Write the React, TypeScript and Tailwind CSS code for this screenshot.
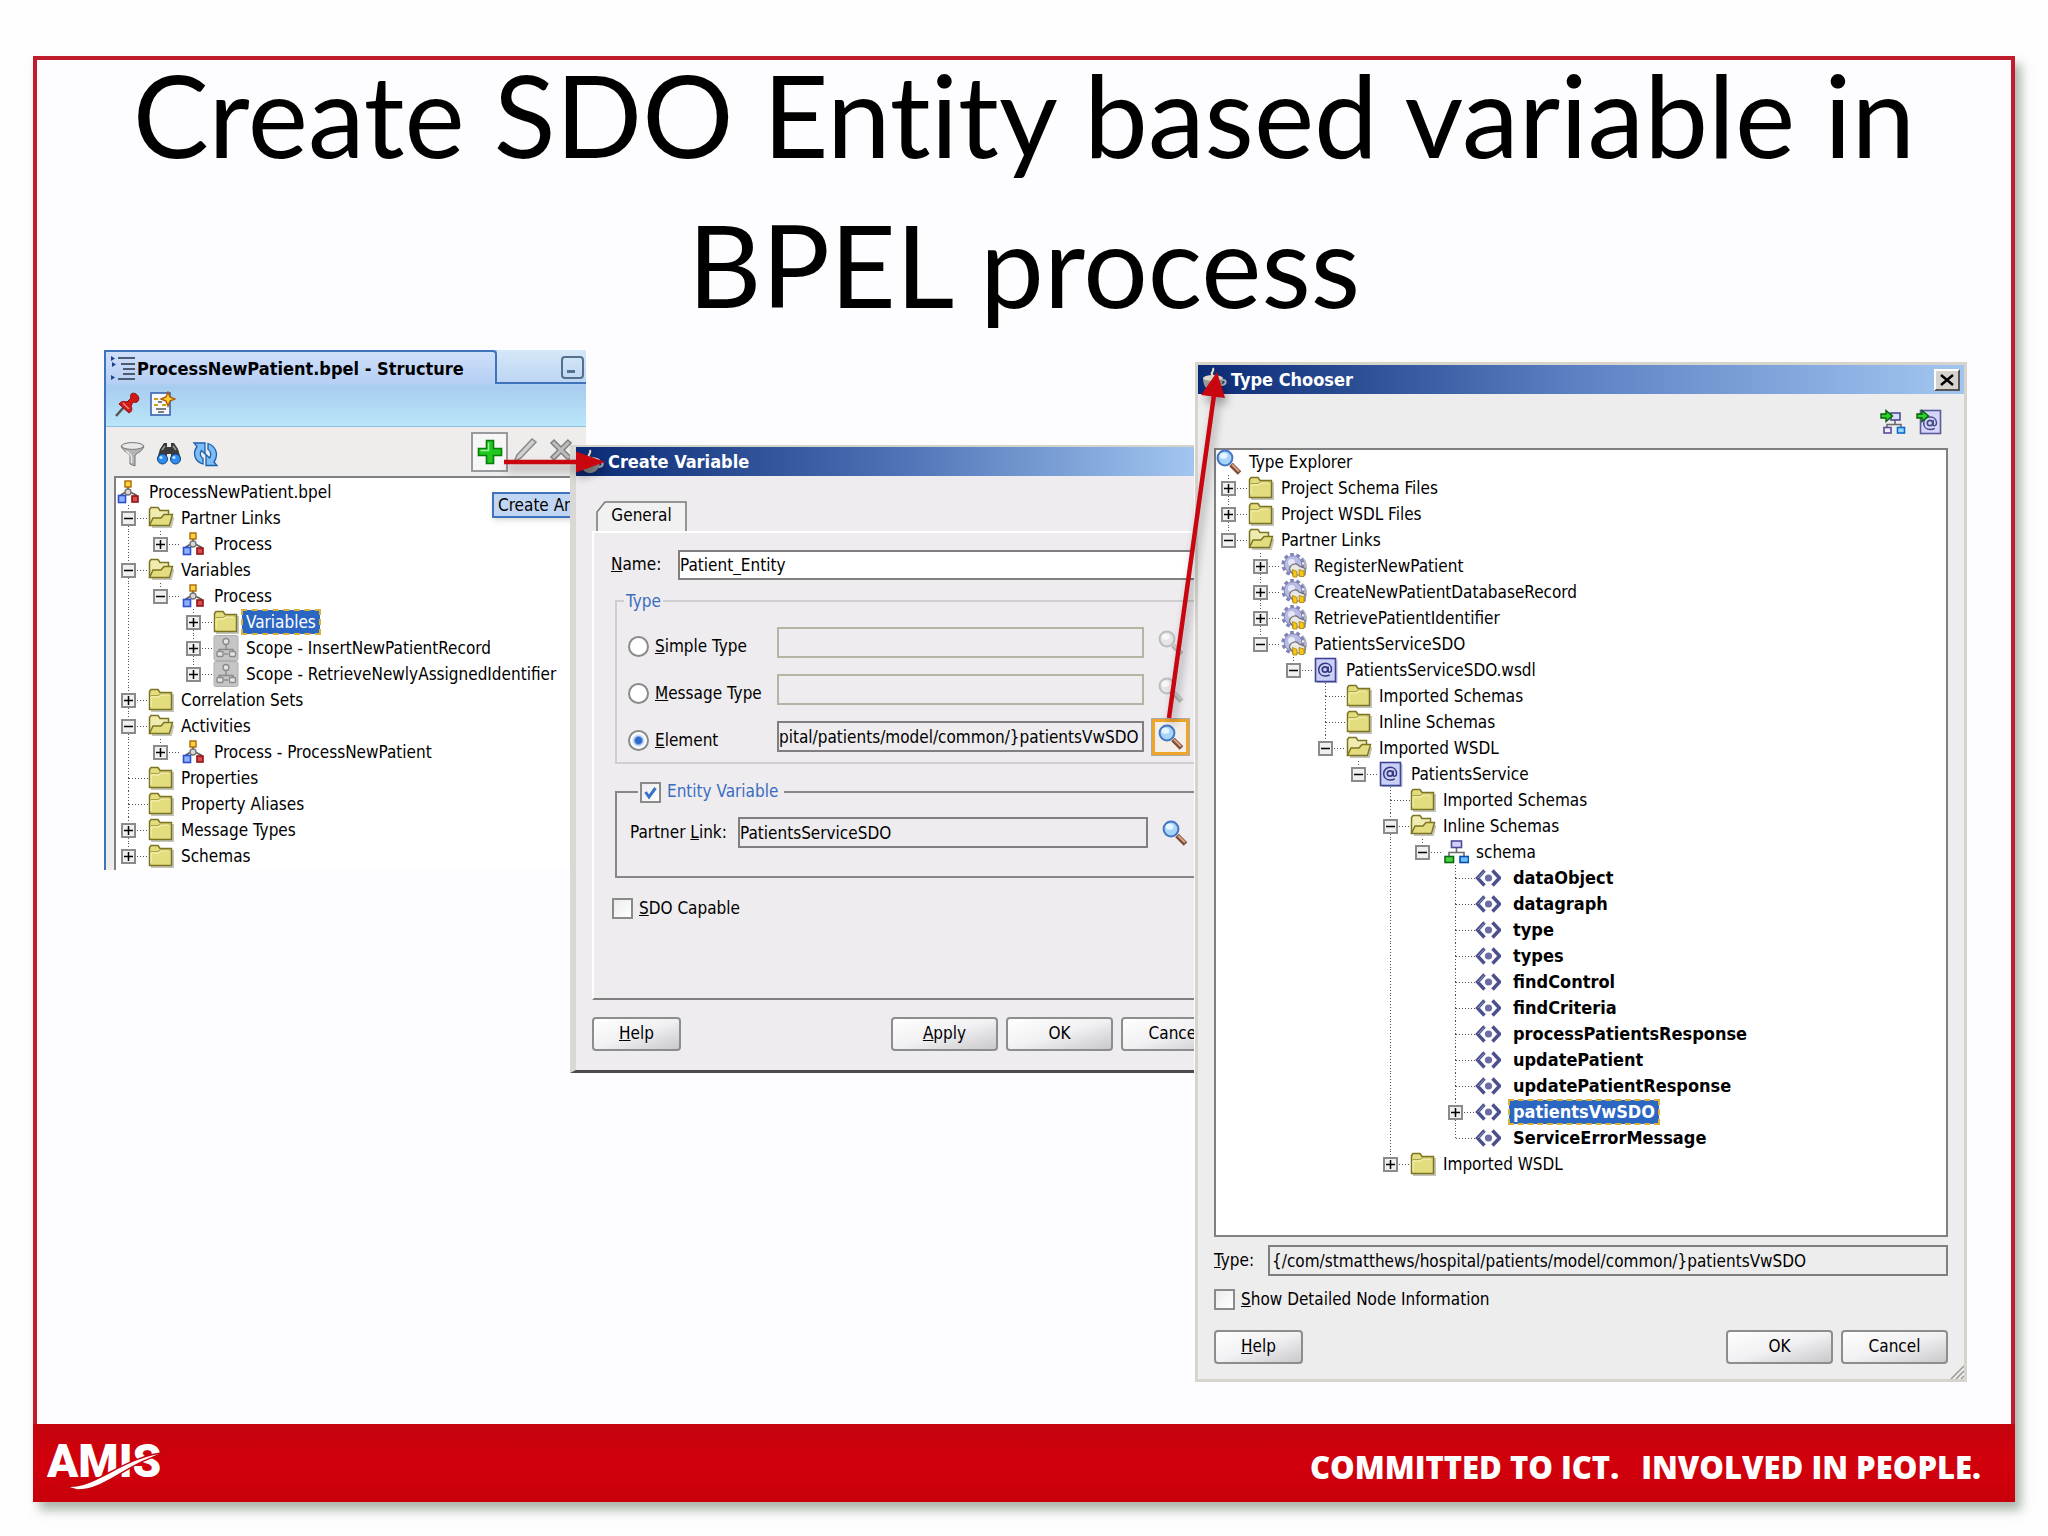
import type { ReactNode } from 'react';

type IconName = 'process' | 'folder' | 'open' | 'scope' | 'search' | 'gear' | 'wsdl' | 'schema' | 'element';

type Node = {
  label: string;
  icon: IconName;
  toggle?: '+' | '-';
  bold?: boolean;
  selected?: boolean;
  children?: Node[];
};

const STRUCTURE: Node = {
  label: 'ProcessNewPatient.bpel',
  icon: 'process',
  children: [
    { label: 'Partner Links', icon: 'open', toggle: '-', children: [{ label: 'Process', icon: 'process', toggle: '+' }] },
    {
      label: 'Variables',
      icon: 'open',
      toggle: '-',
      children: [
        {
          label: 'Process',
          icon: 'process',
          toggle: '-',
          children: [
            { label: 'Variables', icon: 'folder', toggle: '+', selected: true },
            { label: 'Scope - InsertNewPatientRecord', icon: 'scope', toggle: '+' },
            { label: 'Scope - RetrieveNewlyAssignedIdentifier', icon: 'scope', toggle: '+' },
          ],
        },
      ],
    },
    { label: 'Correlation Sets', icon: 'folder', toggle: '+' },
    {
      label: 'Activities',
      icon: 'open',
      toggle: '-',
      children: [{ label: 'Process - ProcessNewPatient', icon: 'process', toggle: '+' }],
    },
    { label: 'Properties', icon: 'folder' },
    { label: 'Property Aliases', icon: 'folder' },
    { label: 'Message Types', icon: 'folder', toggle: '+' },
    { label: 'Schemas', icon: 'folder', toggle: '+' },
  ],
};

const element = (label: string): Node => ({ label, icon: 'element', bold: true });

const TYPES: Node = {
  label: 'Type Explorer',
  icon: 'search',
  children: [
    { label: 'Project Schema Files', icon: 'folder', toggle: '+' },
    { label: 'Project WSDL Files', icon: 'folder', toggle: '+' },
    {
      label: 'Partner Links',
      icon: 'open',
      toggle: '-',
      children: [
        { label: 'RegisterNewPatient', icon: 'gear', toggle: '+' },
        { label: 'CreateNewPatientDatabaseRecord', icon: 'gear', toggle: '+' },
        { label: 'RetrievePatientIdentifier', icon: 'gear', toggle: '+' },
        {
          label: 'PatientsServiceSDO',
          icon: 'gear',
          toggle: '-',
          children: [
            {
              label: 'PatientsServiceSDO.wsdl',
              icon: 'wsdl',
              toggle: '-',
              children: [
                { label: 'Imported Schemas', icon: 'folder' },
                { label: 'Inline Schemas', icon: 'folder' },
                {
                  label: 'Imported WSDL',
                  icon: 'open',
                  toggle: '-',
                  children: [
                    {
                      label: 'PatientsService',
                      icon: 'wsdl',
                      toggle: '-',
                      children: [
                        { label: 'Imported Schemas', icon: 'folder' },
                        {
                          label: 'Inline Schemas',
                          icon: 'open',
                          toggle: '-',
                          children: [
                            {
                              label: 'schema',
                              icon: 'schema',
                              toggle: '-',
                              children: [
                                element('dataObject'),
                                element('datagraph'),
                                element('type'),
                                element('types'),
                                element('findControl'),
                                element('findCriteria'),
                                element('processPatientsResponse'),
                                element('updatePatient'),
                                element('updatePatientResponse'),
                                { label: 'patientsVwSDO', icon: 'element', bold: true, toggle: '+', selected: true },
                                element('ServiceErrorMessage'),
                              ],
                            },
                          ],
                        },
                        { label: 'Imported WSDL', icon: 'folder', toggle: '+' },
                      ],
                    },
                  ],
                },
              ],
            },
          ],
        },
      ],
    },
  ],
};

function Search({ faded = false }: { faded?: boolean }) {
  return (
    <svg viewBox="0 0 26 26" className="h-[26px] w-[26px]" fill="none">
      <path d="M15 15.5L23.5 24" stroke={faded ? '#b5b5b5' : '#7a4a35'} strokeWidth="5" />
      <path d="M16 15.5L23 22.5" stroke={faded ? '#d6d6d6' : '#d9a184'} strokeWidth="2" />
      <circle cx="9" cy="9" r="7.4" fill={faded ? '#e6e6e8' : '#a9d4fa'} stroke={faded ? '#bdbdbd' : '#4377c4'} strokeWidth="2" />
      <ellipse cx="7.5" cy="6.8" rx="4" ry="3" fill={faded ? '#f8f8f8' : '#e6f4ff'} />
    </svg>
  );
}

function NodeIcon({ name }: { name: IconName }) {
  if (name === 'search') return <Search />;
  return (
    <svg viewBox="0 0 26 26" className="h-[26px] w-[26px]" fill="none">
      {name === 'folder' && (
        <>
          <path d="M3 24H25V7" stroke="#c4c4bc" strokeWidth="2" />
          <path d="M1.5 22.5V4.5L3 2.5H10L12 5.5H23.5V22.5Z" fill="#e3dd80" stroke="#7b7420" strokeWidth="1.5" />
          <path d="M3 8.5H10L12 7H22.5" stroke="#a8a04a" />
          <path d="M3 20V10H11L13 8H21" stroke="#f7f4b8" />
        </>
      )}
      {name === 'open' && (
        <>
          <path d="M4 22H23L25.5 12" stroke="#c4c4bc" strokeWidth="2" />
          <path d="M1.5 20.5V4.5L3 2.5H10L12 5.5H20.5V10" fill="#f0ebb0" stroke="#7b7420" strokeWidth="1.5" />
          <path d="M1.5 20.5L5 13H13L16 9.5H24.5L21.5 20.5Z" fill="#e3dd80" stroke="#7b7420" strokeWidth="1.5" />
        </>
      )}
      {name === 'process' && (
        <>
          <path d="M12 6V12M5 20V16L9 13.5M20 20V16L15 13.5" stroke="#5c5c5c" strokeWidth="1.8" />
          <circle cx="12" cy="13" r="3" fill="#d8d8d8" stroke="#777" strokeWidth="1.4" />
          <rect x="9" y="2" width="6" height="6" fill="#ffd23c" stroke="#a8680a" strokeWidth="1.4" />
          <rect x="2.5" y="16.5" width="7" height="7" fill="#8fb0ff" stroke="#2a4fd0" strokeWidth="1.6" />
          <rect x="16" y="17" width="6" height="6" fill="#e04a4a" stroke="#8e1414" strokeWidth="1.6" />
        </>
      )}
      {name === 'scope' && (
        <>
          <rect x="1" y="0.5" width="24" height="25" rx="1.5" fill="#c5c5c5" stroke="#b0b0b0" />
          <path d="M13 9V14M6 17V14.5H20V17" stroke="#8a8a8a" strokeWidth="1.4" />
          <circle cx="13" cy="6.5" r="3" fill="#e4e4e4" stroke="#8a8a8a" strokeWidth="1.4" />
          <rect x="4" y="16.5" width="6" height="5" rx="1" fill="#e4e4e4" stroke="#8a8a8a" strokeWidth="1.4" />
          <rect x="16.5" y="16.5" width="6" height="5" rx="1" fill="#e4e4e4" stroke="#8a8a8a" strokeWidth="1.4" />
          <path d="M11 19H15" stroke="#8a8a8a" strokeWidth="1.4" />
        </>
      )}
      {name === 'gear' && (
        <>
          <path d="M21 5C25 9 26 15 23 20" stroke="#b5b5c0" strokeWidth="2.5" />
          <circle cx="12" cy="11.5" r="9.8" stroke="#8083b8" strokeWidth="3.6" strokeDasharray="3.6 2.557" />
          <circle cx="12" cy="11.5" r="8.8" fill="#b9bce2" stroke="#8083b8" />
          <circle cx="10.5" cy="9.5" r="3.5" fill="#e6e7f8" />
          <path d="M8.5 17C8.5 11 15.5 9 18 13L24 15.5V22L13 22Z" fill="#e8e8e8" stroke="#6f6f6f" strokeWidth="1.2" />
          <path d="M11.5 16.5L16 18.5V24H12ZM18 16.5L23 18V23.5H18.5Z" fill="#f8c812" stroke="#a87c06" strokeWidth="0.8" />
        </>
      )}
      {name === 'wsdl' && (
        <>
          <rect x="2.5" y="1.5" width="20" height="23" fill="#ccd0f6" stroke="#3d4493" strokeWidth="1.6" />
          <path d="M23.8 3V25.5H4" stroke="#8e93c4" />
          <circle cx="12" cy="12.5" r="2.7" stroke="#333a80" strokeWidth="1.7" />
          <path d="M15.2 9.5V14C15.5 16 18.5 15.5 18.5 12.5C18.5 8.5 15.5 6.3 12.3 6.3C8.5 6.3 5.7 9 5.7 12.7C5.7 16.5 8.6 19 12.3 19C14 19 15.5 18.6 16.7 17.8" stroke="#333a80" strokeWidth="1.5" />
        </>
      )}
      {name === 'schema' && (
        <>
          <path d="M13.5 9V13M6 18V13.5H21V18" stroke="#6b6b6b" strokeWidth="1.6" />
          <rect x="8.5" y="2" width="10" height="6.5" fill="#d0d0ff" stroke="#4b4b93" strokeWidth="1.6" />
          <rect x="2" y="17.5" width="8.5" height="6" fill="#46d246" stroke="#0b6b0b" strokeWidth="1.6" />
          <rect x="17" y="17.5" width="8.5" height="6" fill="#6bc1ff" stroke="#0a4ea8" strokeWidth="1.6" />
        </>
      )}
      {name === 'element' && (
        <>
          <path d="M9.5 5.5L2.5 13L9.5 20.5M17.5 5.5L24.5 13L17.5 20.5" stroke="#4c4f8d" strokeWidth="3.4" />
          <path d="M9 6.5L3 13" stroke="#9698c6" />
          <circle cx="13.5" cy="13" r="3.6" fill="#6a6da6" />
        </>
      )}
    </svg>
  );
}

const DOTS_V = 'w-px bg-[repeating-linear-gradient(to_bottom,#555_0_1px,transparent_1px_3px)]';
const DOTS_H = 'h-px bg-[repeating-linear-gradient(to_right,#555_0_1px,transparent_1px_3px)]';
const STEP = 32.4;

const cellWidth = (i: number) => Math.round((i + 1) * STEP) - Math.round(i * STEP);

// trail[i] is true while the branch at level i still has siblings below
function Branch({ node, trail }: { node: Node; trail: boolean[] }) {
  const depth = trail.length - 1;
  return (
    <li>
      <div className="flex h-[26px] items-center whitespace-nowrap">
        {trail.slice(0, Math.max(depth, 0)).map((more, i) => (
          <span key={i} className="flex h-full flex-none pl-3" style={{ width: cellWidth(i) }}>
            {more && <span className={`${DOTS_V} h-full`} />}
          </span>
        ))}
        {depth >= 0 && (
          <span className="flex h-full flex-none items-center" style={{ width: cellWidth(depth) }}>
            <span className="flex h-full w-[25px] flex-none flex-col items-center">
              <span className={`${DOTS_V} flex-1`} />
              {node.toggle && (
                <button
                  aria-label={`Toggle ${node.label}`}
                  className="flex h-[15px] w-[15px] flex-none items-center justify-center border-2 border-[#8b8b8b] bg-[#f0f0f0]"
                >
                  <svg viewBox="0 0 9 9" className="h-[9px] w-[9px]" stroke="#000" strokeWidth="1.5">
                    <path d={node.toggle === '+' ? 'M0 4.5H9M4.5 0V9' : 'M0 4.5H9'} />
                  </svg>
                </button>
              )}
              <span className={`flex-1 ${trail[depth] ? DOTS_V : ''}`} />
            </span>
            <span className={`${DOTS_H} flex-1 ${node.toggle ? '-ml-1' : '-ml-3'}`} />
          </span>
        )}
        <span className="flex-none"><NodeIcon name={node.icon} /></span>
        <span
          className={`px-1 leading-6 ${node.bold ? 'ml-2 text-[18px] font-bold' : 'ml-[3px]'} ${
            node.selected ? 'bg-[#2c66c3] text-white outline-2 -outline-offset-1 outline-dashed outline-[#d9b23a]' : ''
          }`}
        >
          {node.label}
        </span>
      </div>
      {node.children && (
        <ul>
          {node.children.map((child, i) => (
            <Branch key={i} node={child} trail={[...trail, i < node.children!.length - 1]} />
          ))}
        </ul>
      )}
    </li>
  );
}

function PushButton({ children, className = '' }: { children: ReactNode; className?: string }) {
  return (
    <button
      className={`h-[34px] flex-none rounded-[4px] border-2 border-[#8d8d8d] bg-linear-to-br from-white via-[#f1f0f2] to-[#c9c8cb] ${className}`}
    >
      {children}
    </button>
  );
}

function Cup() {
  return (
    <svg viewBox="0 0 26 26" className="h-[26px] w-[26px]" fill="none">
      <path d="M12 8C8 6 14 5 12 1" stroke="#f2e6c0" strokeWidth="2" />
      <path d="M21 13C26 12 26 18 20 18" stroke="#b9b9b9" strokeWidth="2" />
      <path d="M2 11H22C22 19 18 24 12 24C6 24 2 19 2 11Z" fill="#9c9c9c" />
      <ellipse cx="12" cy="11" rx="10" ry="3" fill="#dcd8cc" />
    </svg>
  );
}

function CheckBox({ id, checked = false }: { id: string; checked?: boolean }) {
  return (
    <span className="relative flex h-[21px] w-[21px] flex-none">
      <input
        id={id}
        type="checkbox"
        defaultChecked={checked}
        className="h-full w-full appearance-none border-2 border-[#8a8a8a] bg-linear-to-br from-[#ececec] to-white"
      />
      {checked && (
        <svg viewBox="0 0 21 21" className="pointer-events-none absolute inset-0" fill="none">
          <path d="M5.5 10L9 15L15.5 6" stroke="#3b73c8" strokeWidth="3" />
        </svg>
      )}
    </span>
  );
}

function StructurePanel() {
  return (
    <section className="absolute top-[13px] left-[67px] h-[520px] w-[482px] overflow-hidden border-l-2 border-[#3f74bd] bg-[#eeedec]">
      <div className="h-[77px] border-b border-[#8fc0e0] bg-linear-to-b from-[#b9cff2] via-[#a9cdf0] to-[#b9e6f9]">
        <div className="flex h-[34px] items-stretch">
          <h2 className="flex w-[391px] items-center gap-px rounded-tr-[4px] border-t-2 border-r-2 border-[#3f74bd] bg-linear-to-b from-[#cfdff9] to-[#b5cff4] pl-1 text-[18px] font-bold whitespace-nowrap">
            <svg viewBox="0 0 26 26" className="h-[26px] w-[26px] flex-none" fill="none">
              <path d="M8 3H25M11 9H25M13 14H25M13 19H25M8 24H25" stroke="#4d5b70" strokeWidth="2" />
              <path d="M1 1L5 3.5L1 6ZM2 7L6 9.5L2 12ZM1 20L5 22.5L1 25Z" fill="#1d4391" />
            </svg>
            ProcessNewPatient.bpel - Structure
          </h2>
          <div className="flex flex-1 items-center justify-end border-b-2 border-[#3f74bd] bg-linear-to-b from-[#d5e8f8] to-[#bed6f3] pt-0.5 pr-0.5">
            <button aria-label="Minimize" className="flex h-[23px] w-[23px] items-end rounded-[4px] border-2 border-[#54708f] p-1">
              <span className="h-[3px] w-2 bg-[#54708f]" />
            </button>
          </div>
        </div>
        <div className="flex items-center gap-[9px] pt-[7px] pl-[9px]">
          <button aria-label="Pin">
            <svg viewBox="0 0 26 26" className="h-[26px] w-[26px]" fill="none">
              <path d="M1 25L9 16" stroke="#555" strokeWidth="2.5" />
              <path d="M4 13C6 10 9 10 12 11L16 7C14 3 18 1 21 3C24 5 25 9 22 11C20 12 19 11 18 11L16 15C18 19 16 21 14 22Z" fill="#d01818" stroke="#8e0e0e" />
              <path d="M8 12L14 18" stroke="#f58080" strokeWidth="1.5" />
            </svg>
          </button>
          <button aria-label="New view">
            <svg viewBox="0 0 26 26" className="h-[26px] w-[26px]" fill="none">
              <rect x="1" y="2" width="19" height="22" fill="#f5f8ff" stroke="#3a62b0" strokeWidth="1.6" />
              <path d="M4 8H8M4 14H8M12 14H16" stroke="#c8a010" strokeWidth="2" />
              <path d="M8 11H12M6 18H16M8 21H14" stroke="#555" strokeWidth="1.5" />
              <path d="M18 1L20 6L25 8L20 10L18 15L16 10L11 8L16 6Z" fill="#ffcf30" stroke="#b05a08" strokeWidth="1.4" />
            </svg>
          </button>
        </div>
      </div>
      <div className="flex h-[49px] items-center gap-[10px] pt-1 pr-[11px] pl-[14px]">
        <button aria-label="Filter">
          <svg viewBox="0 0 26 26" className="h-[26px] w-[26px]" fill="none">
            <path d="M1 5C4 12 10 12 10 15V23L15 25V15C15 12 22 12 24 5Z" fill="#b4b4b4" stroke="#777" />
            <path d="M6 10C9 12 11 13 11.5 16V22" stroke="#e6e6e6" strokeWidth="1.5" />
            <ellipse cx="12.5" cy="5" rx="11" ry="3.4" fill="#e8e8e8" stroke="#777" />
          </svg>
        </button>
        <button aria-label="Find">
          <svg viewBox="0 0 26 26" className="h-[26px] w-[26px]">
            <path d="M4 8L8 2H11V6H15V2H18L22 8L25 18H15V13H11V18H1Z" fill="#3a3a3a" />
            <path d="M6 9L9 5M20 9L17 5" stroke="#9a9a9a" strokeWidth="1.5" />
            <circle cx="6.5" cy="18" r="5" fill="#2b8df0" stroke="#173f78" />
            <circle cx="19.5" cy="18" r="5" fill="#2b8df0" stroke="#173f78" />
            <circle cx="5" cy="16.5" r="1.6" fill="#b9dfff" />
            <circle cx="18" cy="16.5" r="1.6" fill="#b9dfff" />
          </svg>
        </button>
        <button aria-label="Refresh">
          <svg viewBox="0 0 26 26" className="h-[26px] w-[26px]" fill="#7dbcf5" stroke="#1b5fae" strokeWidth="1.3">
            <path d="M2 2H13V13L9.500 9.500C7.500 12 8 15.500 11 17.500V23C3 20.500 0 12.500 5 5.500Z" />
            <path d="M25 24.500H14V13.500L17.500 17C19.500 14.500 19 10 16 8.500V2.500C24 5 27 14 22 21Z" />
          </svg>
        </button>
        <button aria-label="Create" className="-mt-1 -mr-[5px] ml-auto flex h-[40px] w-[37px] items-center justify-center border-2 border-[#9a9a9a] bg-[#f6f6f6]">
          <svg viewBox="0 0 26 26" className="h-[26px] w-[26px]">
            <path d="M9.5 1.5H16.5V9.5H24.5V16.5H16.5V24.5H9.5V16.5H1.5V9.5H9.5Z" fill="#1fc81f" stroke="#0a7a0a" strokeWidth="1.6" />
            <path d="M11.5 3.5V11.5H3.5" fill="none" stroke="#9af59a" strokeWidth="1.5" />
          </svg>
        </button>
        <button aria-label="Edit" className="-mt-2">
          <svg viewBox="0 0 26 26" className="h-[26px] w-[26px]" fill="none">
            <path d="M1 25L4 18L19 2L23 5L8 21Z" fill="#d0d0d0" stroke="#8a8a8a" strokeWidth="1.5" />
          </svg>
        </button>
        <button aria-label="Delete" className="-mt-2">
          <svg viewBox="0 0 26 26" className="h-[26px] w-[26px]" fill="none">
            <path d="M3 4L21 22M21 4L3 22" stroke="#808080" strokeWidth="6" />
            <path d="M4 5L20 21M20 5L4 21" stroke="#bdbdbd" strokeWidth="3" />
          </svg>
        </button>
      </div>
      <div className="relative ml-2 h-[394px] border-t-2 border-l-2 border-[#808080] bg-white pt-px text-[17px]">
        <ul>
          <Branch node={STRUCTURE} trail={[]} />
        </ul>
        <div className="absolute top-[14px] left-[376px] h-[26px] w-[110px] border-2 border-[#3f74bd] bg-[#c0d6f2] px-1 leading-[22px] whitespace-nowrap shadow-md">
          Create An
        </div>
      </div>
    </section>
  );
}

const KINDS = [
  { id: 'simple', key: 'S', rest: 'imple Type', value: '' },
  { id: 'message', key: 'M', rest: 'essage Type', value: '' },
  { id: 'element', key: 'E', rest: 'lement', value: 'pital/patients/model/common/}patientsVwSDO' },
];

function CreateVariable() {
  return (
    <section className="absolute top-[108px] left-[533px] flex h-[628px] w-[624px] flex-col overflow-hidden border-t-2 border-b-3 border-l-6 border-t-[#d6d3cc] border-b-[#4a4a4a] border-l-[#d9d8d4] bg-[#eeecee] text-[17px]">
      <h2 className="flex h-[29px] flex-none items-center gap-1 bg-linear-to-r from-[#0b2a74] via-[#4a6fb3] to-[#a3c6f0] pl-0.5 text-[18px] font-bold text-white">
        <Cup />
        Create Variable
      </h2>
      <div className="mt-[25px] flex flex-none pl-5">
        <button role="tab" className="relative h-[30px] w-[91px]">
          <svg viewBox="0 0 91 30" className="absolute inset-0" fill="none">
            <path d="M1 30V11L9 1H90V30" fill="#f2f1f2" stroke="#777" strokeWidth="1.5" />
          </svg>
          <span className="relative">General</span>
        </button>
      </div>
      <div className="ml-4 flex flex-1 flex-col border-t-2 border-b-2 border-l-2 border-t-white border-b-[#7f7f7f] border-l-white">
        <div className="mt-[17px] flex items-center pl-[17px]">
          <label htmlFor="var-name" className="w-[67px]"><u>N</u>ame:</label>
          <input id="var-name" defaultValue="Patient_Entity" className="h-[30px] min-w-0 flex-1 border-2 border-r-0 border-[#7f7f7f] bg-white" />
        </div>
        <fieldset className="mt-2 ml-[21px] border-2 border-r-0 border-[#cfcfcf] pt-[13px] pb-[10px] pl-[11px]">
          <legend className="ml-[-4px] px-0.5 leading-[26px] text-[#3b6cc0]">Type</legend>
          <div className="flex flex-col gap-4">
            {KINDS.map((kind) => (
              <div key={kind.id} className="flex h-[31px] items-center pr-[5px]">
                <input
                  id={kind.id}
                  type="radio"
                  name="kind"
                  defaultChecked={kind.id === 'element'}
                  className="mt-2 h-[21px] w-[21px] flex-none appearance-none rounded-full border-2 border-[#8a8a8a] bg-white checked:bg-[radial-gradient(circle,#2f68c8_0_3px,#c6dafa_5px,#fff_7px)]"
                />
                <label htmlFor={kind.id} className="mt-2 w-[128px] flex-none pl-1.5 whitespace-nowrap">
                  <u>{kind.key}</u>{kind.rest}
                </label>
                <input
                  aria-label={`${kind.key}${kind.rest} value`}
                  readOnly
                  defaultValue={kind.value}
                  className={`h-[31px] min-w-0 flex-1 border-2 ${kind.value ? 'border-[#7f7f7f]' : 'border-[#b5b5a4]'}`}
                />
                {kind.value ? (
                  <button aria-label="Browse" className="ml-2 flex h-[36px] w-[37px] flex-none items-center justify-center border-3 border-[#eda62a] bg-[#f3eee8] outline outline-[#a9a9a9]">
                    <Search />
                  </button>
                ) : (
                  <button aria-label="Browse" disabled className="ml-2 flex h-[36px] w-[37px] flex-none items-center justify-center">
                    <Search faded />
                  </button>
                )}
              </div>
            ))}
          </div>
        </fieldset>
        <fieldset className="mt-[15px] ml-[21px] border-2 border-r-0 border-[#868686] pt-[12px] pb-[28px] pl-[13px]">
          <legend className="ml-2 flex h-[26px] items-center gap-1.5 px-0.5">
            <CheckBox id="entity" checked />
            <label htmlFor="entity" className="pr-1 text-[#3b6cc0]">Entity Variable</label>
          </legend>
          <div className="flex items-center pr-1">
            <label htmlFor="partner" className="w-[108px] flex-none whitespace-nowrap">Partner <u>L</u>ink:</label>
            <input id="partner" readOnly defaultValue="PatientsServiceSDO" className="h-[31px] min-w-0 flex-1 border-2 border-[#7f7f7f]" />
            <button aria-label="Browse partner links" className="ml-3 flex w-[30px] flex-none justify-center">
              <Search />
            </button>
          </div>
        </fieldset>
        <div className="mt-[18px] flex items-center gap-1.5 pl-[18px]">
          <CheckBox id="sdo" />
          <label htmlFor="sdo"><u>S</u>DO Capable</label>
        </div>
      </div>
      <div className="mt-[17px] mb-[19px] flex w-[652px] flex-none gap-2 pl-4">
        <PushButton className="mr-auto w-[89px]"><u>H</u>elp</PushButton>
        <PushButton className="w-[107px]"><u>A</u>pply</PushButton>
        <PushButton className="w-[107px]">OK</PushButton>
        <PushButton className="w-[107px]">Cancel</PushButton>
      </div>
    </section>
  );
}

function TypeChooser() {
  return (
    <section className="absolute top-[25px] left-[1158px] flex h-[1020px] w-[772px] flex-col border-3 border-[#d6d4cd] bg-[#eeedee] text-[17px]">
      <h2 className="flex h-[29px] flex-none items-center gap-1 bg-linear-to-r from-[#0b2a74] via-[#5d82c4] to-[#a3c6f0] pr-1 pl-[3px] text-[18px] font-bold text-white">
        <Cup />
        Type Chooser
        <button aria-label="Close" className="ml-auto flex h-[22px] w-[26px] items-center justify-center border-2 border-t-white border-r-[#555] border-b-[#555] border-l-white bg-[#d6d3ce]">
          <svg viewBox="0 0 14 12" className="h-3 w-3.5" stroke="#000" strokeWidth="2.4">
            <path d="M1 1L13 11M13 1L1 11" />
          </svg>
        </button>
      </h2>
      <div className="flex h-[54px] flex-none items-center justify-end gap-[10px] pt-0.5 pr-[22px]">
        <button aria-label="Import schema">
          <svg viewBox="0 0 26 26" className="h-[26px] w-[26px]" fill="none">
            <path d="M15 10V16M7 19V15.5H21V19" stroke="#6b6b6b" strokeWidth="1.6" />
            <rect x="11" y="4" width="9" height="7" fill="#dcdcff" stroke="#4b4b93" strokeWidth="1.6" />
            <rect x="4" y="18.5" width="7" height="5.5" fill="#ececff" stroke="#5a4b9a" strokeWidth="1.6" />
            <rect x="17.5" y="18.5" width="7" height="5.5" fill="#9ad6ff" stroke="#0a6ec8" strokeWidth="1.6" />
            <path d="M1 5H6V1.5L12.5 7L6 12.5V9H1Z" fill="#2fd02f" stroke="#075f07" strokeWidth="1.4" />
          </svg>
        </button>
        <button aria-label="Import WSDL">
          <svg viewBox="0 0 26 26" className="h-[26px] w-[26px]" fill="none">
            <rect x="4.5" y="1.5" width="20" height="23" fill="#d5d5fa" stroke="#5a5a9c" strokeWidth="1.6" />
            <circle cx="14" cy="14" r="2.7" stroke="#444a88" strokeWidth="1.7" />
            <path d="M17.2 11V15.5C17.5 17.5 20.5 17 20.5 14C20.5 10 17.5 8 14.3 8C10.5 8 7.7 10.5 7.7 14.2C7.7 18 10.6 20.5 14.3 20.5C16 20.5 17.5 20 18.7 19.3" stroke="#444a88" strokeWidth="1.5" />
            <path d="M1 5H6V1.5L12.5 7L6 12.5V9H1Z" fill="#2fd02f" stroke="#075f07" strokeWidth="1.4" />
          </svg>
        </button>
      </div>
      <div className="flex flex-1 flex-col px-4">
        <div className="h-[789px] flex-none border-2 border-[#808080] bg-white">
          <ul className="-mt-px">
            <Branch node={TYPES} trail={[]} />
          </ul>
        </div>
        <div className="mt-2 flex items-center">
          <label htmlFor="type" className="w-[54px]"><u>T</u>ype:</label>
          <input
            id="type"
            readOnly
            defaultValue="{/com/stmatthews/hospital/patients/model/common/}patientsVwSDO"
            className="h-[31px] min-w-0 flex-1 border-2 border-[#7f7f7f] px-0.5"
          />
        </div>
        <div className="mt-[11px] flex items-center gap-1.5">
          <CheckBox id="detail" />
          <label htmlFor="detail"><u>S</u>how Detailed Node Information</label>
        </div>
        <div className="mt-[17px] flex gap-2">
          <PushButton className="mr-auto w-[89px]"><u>H</u>elp</PushButton>
          <PushButton className="w-[107px]">OK</PushButton>
          <PushButton className="w-[107px]">Cancel</PushButton>
        </div>
      </div>
      <svg viewBox="0 0 14 14" className="absolute right-0 bottom-0 h-3.5 w-3.5" stroke="#9b9a92" strokeWidth="1.5">
        <path d="M1 14L14 1M6 14L14 6M11 14L14 11" />
      </svg>
    </section>
  );
}

function Arrows() {
  return (
    <svg viewBox="0 0 1960 1087" className="pointer-events-none absolute top-0 left-0 h-[1087px] w-[1960px] drop-shadow-[3px_6px_4px_rgba(0,0,0,0.35)]">
      <g fill="#c90610" stroke="#c90610">
        <path d="M467 125H541" strokeWidth="4.5" />
        <path d="M539 114.5L568 125L539 135.5Z" stroke="none" />
        <path d="M1132 381L1177 58" strokeWidth="4.5" />
        <path d="M1180 35L1164 58L1188 61Z" stroke="none" />
      </g>
    </svg>
  );
}

export default function App() {
  return (
    <main className="flex min-h-screen flex-col bg-[#fefefe] px-[33px] pt-14 pb-[34px] font-['DejaVu_Sans_Condensed','DejaVu_Sans',sans-serif] text-black">
      <article className="flex flex-1 flex-col border-4 border-[#c11c2c] bg-[#fdfcfe] shadow-[6px_8px_10px_rgba(90,110,90,0.5)]">
        <h1 className="-mt-[21px] -mb-0.5 text-center font-['Lato',sans-serif] text-[114px] leading-[150px] [font-variant-ligatures:none]">
          Create SDO Entity based variable in
          <br />
          BPEL process
        </h1>
        <div className="relative min-h-[1087px] flex-1">
          <StructurePanel />
          <CreateVariable />
          <TypeChooser />
          <Arrows />
        </div>
        <footer className="-mx-1 -mb-1 flex h-[78px] items-center justify-between bg-linear-to-b from-[#c4040e] via-[#d2000c] to-[#c8000a] pr-[34px] pl-[14px] text-white">
          <div className="relative flex h-full items-center pb-1 font-['Roboto',sans-serif] text-[46px] leading-none font-black">
            AMIS
            <svg viewBox="0 0 130 60" className="absolute top-[10px] left-0 h-[60px] w-[130px]" fill="none">
              <path d="M10 50C45 62 70 22 122 18C80 28 60 56 30 56Z" fill="#fff" stroke="#c4040e" strokeWidth="1.5" />
            </svg>
          </div>
          <p className="flex gap-[22px] pt-2 font-['Open_Sans',sans-serif] text-[31px] font-extrabold">
            <span>COMMITTED TO ICT.</span>
            <span>INVOLVED IN PEOPLE.</span>
          </p>
        </footer>
      </article>
    </main>
  );
}
